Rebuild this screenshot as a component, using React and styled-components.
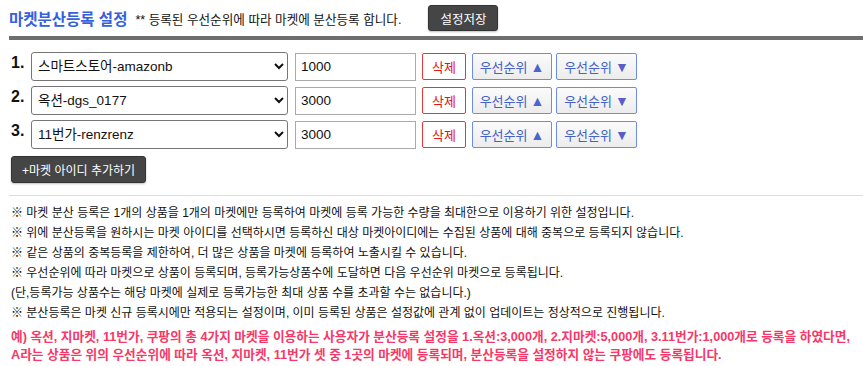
import React, { useState } from "react";
import styled, { createGlobalStyle } from "styled-components";

const GlobalStyle = createGlobalStyle`
  body {
    margin: 0;
    background: #fff;
    font-family: "Liberation Sans", "Noto Sans CJK KR", sans-serif;
    color: #111;
  }
`;

const Page = styled.div`
  padding: 0 0 0 9px;
`;

const Header = styled.div`
  display: flex;
  align-items: center;
  height: 36px;
`;

const Title = styled.h2`
  margin: 0;
  font-size: 15.5px;
  font-weight: bold;
  color: #3560dc;
`;

const Subtitle = styled.span`
  margin-left: 8px;
  font-size: 12.6px;
  color: #111;
`;

const DarkButton = styled.button`
  font-family: inherit;
  font-size: ${(p) => p.$fs || 12}px;
  color: #fff;
  background: #454545;
  border: 1px solid #333;
  border-radius: 3px;
  box-shadow: 0 1px 2px rgba(0, 0, 0, 0.25);
  height: ${(p) => p.$h || 27}px;
  padding: 0 ${(p) => p.$px || 12}px;
  margin-left: ${(p) => p.$ml || 0}px;
  cursor: pointer;
`;

const Bar = styled.div`
  height: 4px;
  background: #6e6e6e;
`;

const Rows = styled.div`
  display: flex;
  flex-direction: column;
  gap: 5px;
  margin-top: 12px;
  padding-left: 2px;
`;

const Row = styled.div`
  display: flex;
  align-items: center;
`;

const Num = styled.span`
  width: 20px;
  font-size: 16px;
  font-weight: bold;
  align-self: flex-start;
  line-height: 22px;
`;

const MarketSelect = styled.select`
  width: 257px;
  height: 29px;
  font-family: inherit;
  font-size: 13.5px;
  color: #111;
  border: 1px solid #767676;
  border-radius: 3px;
  background: #fff;
  padding: 0 2px;
`;

const CountInput = styled.input`
  width: 121px;
  height: 28px;
  box-sizing: border-box;
  margin-left: 7px;
  border: 1px solid #aaa;
  font-family: inherit;
  font-size: 13.5px;
  padding: 0 5px;
  color: #111;
`;

const SmallButton = styled.button`
  height: 27px;
  box-sizing: border-box;
  font-family: inherit;
  font-size: 13px;
  border-radius: 2px;
  padding: 0;
  width: ${(p) => p.$w}px;
  margin-left: ${(p) => p.$ml}px;
  cursor: pointer;
  color: ${(p) => (p.$danger ? "#e3141a" : "#4262c8")};
  border: 1px solid ${(p) => (p.$danger ? "#e8353a" : "#6c8ce6")};
  background: ${(p) =>
    p.$danger ? "#fff" : "linear-gradient(#fbfbfb, #ececec)"};
`;

const Arrow = styled.span`
  margin-left: 3px;
  font-size: 14px;
  color: ${(p) => (p.$down ? "#5a5cc8" : "#4866d0")};
`;

const AddWrap = styled.div`
  margin-top: 7px;
  padding-left: 2px;
`;

const Divider = styled.div`
  height: 1px;
  background: #ddd;
  margin-top: 12px;
`;

const Notes = styled.div`
  margin-top: 7px;
  font-size: 12px;
  line-height: 20px;
  padding-left: 2px;
  color: #111;
`;

const Example = styled.div`
  margin-top: 5px;
  font-size: 12.7px;
  font-weight: bold;
  line-height: 18px;
  color: #f73768;
  padding-left: 2px;
`;

const markets = [
  "스마트스토어-amazonb",
  "옥션-dgs_0177",
  "11번가-renzrenz",
];

const initial = [
  { market: markets[0], count: "1000" },
  { market: markets[1], count: "3000" },
  { market: markets[2], count: "3000" },
];

const notes = [
  "※ 마켓 분산 등록은 1개의 상품을 1개의 마켓에만 등록하여 마켓에 등록 가능한 수량을 최대한으로 이용하기 위한 설정입니다.",
  "※ 위에 분산등록을 원하시는 마켓 아이디를 선택하시면 등록하신 대상 마켓아이디에는 수집된 상품에 대해 중복으로 등록되지 않습니다.",
  "※ 같은 상품의 중복등록을 제한하여, 더 많은 상품을 마켓에 등록하여 노출시킬 수 있습니다.",
  "※ 우선순위에 따라 마켓으로 상품이 등록되며, 등록가능상품수에 도달하면 다음 우선순위 마켓으로 등록됩니다.",
  "(단,등록가능 상품수는 해당 마켓에 실제로 등록가능한 최대 상품 수를 초과할 수는 없습니다.)",
  "※ 분산등록은 마켓 신규 등록시에만 적용되는 설정이며, 이미 등록된 상품은 설정값에 관계 없이 업데이트는 정상적으로 진행됩니다.",
];

const App = () => {
  const [rows, setRows] = useState(initial);

  const update = (i, key, value) =>
    setRows(rows.map((r, j) => (j === i ? { ...r, [key]: value } : r)));

  return (
    <Page>
      <GlobalStyle />
      <Header>
        <Title>마켓분산등록 설정</Title>
        <Subtitle>** 등록된 우선순위에 따라 마켓에 분산등록 합니다.</Subtitle>
        <DarkButton $ml={27} $h={26} $px={11} $fs={12.5}>설정저장</DarkButton>
      </Header>
      <Bar />
      <Rows>
        {rows.map((r, i) => (
          <Row key={i}>
            <Num>{i + 1}.</Num>
            <MarketSelect
              value={r.market}
              onChange={(e) => update(i, "market", e.target.value)}
            >
              {markets.map((m) => (
                <option key={m} value={m}>
                  {m}
                </option>
              ))}
            </MarketSelect>
            <CountInput
              value={r.count}
              onChange={(e) => update(i, "count", e.target.value)}
            />
            <SmallButton $danger $w={44} $ml={6}>
              삭제
            </SmallButton>
            <SmallButton $w={80} $ml={6}>
              우선순위<Arrow>▲</Arrow>
            </SmallButton>
            <SmallButton $w={81} $ml={4}>
              우선순위<Arrow $down>▼</Arrow>
            </SmallButton>
          </Row>
        ))}
      </Rows>
      <AddWrap>
        <DarkButton $h={27} $px={10}>+마켓 아이디 추가하기</DarkButton>
      </AddWrap>
      <Divider />
      <Notes>
        {notes.map((n) => (
          <div key={n}>{n}</div>
        ))}
      </Notes>
      <Example>
        <div>
          예) 옥션, 지마켓, 11번가, 쿠팡의 총 4가지 마켓을 이용하는 사용자가 분산등록 설정을 1.옥션:3,000개, 2.지마켓:5,000개, 3.11번가:1,000개로 등록을 하였다면,
        </div>
        <div>
          A라는 상품은 위의 우선순위에 따라 옥션, 지마켓, 11번가 셋 중 1곳의 마켓에 등록되며, 분산등록을 설정하지 않는 쿠팡에도 등록됩니다.
        </div>
      </Example>
    </Page>
  );
};

export default App;
